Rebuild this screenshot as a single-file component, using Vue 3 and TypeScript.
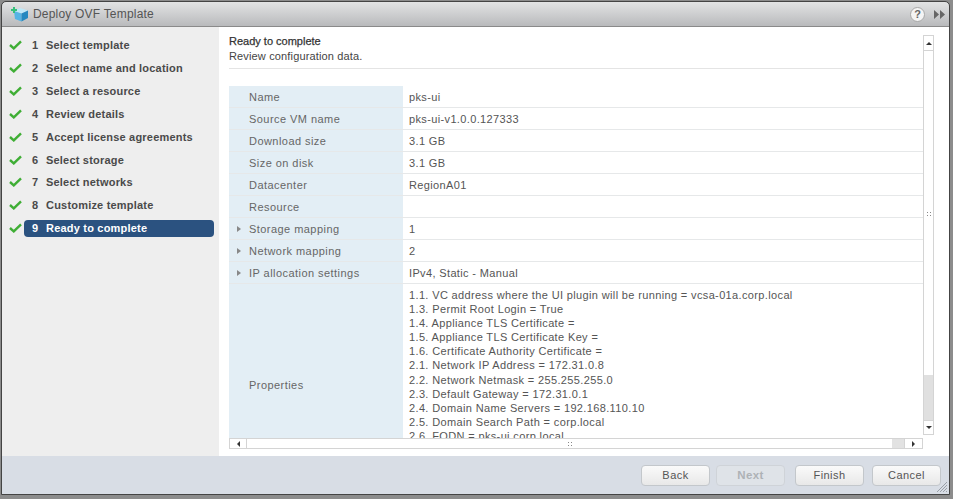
<script setup lang="ts">
const steps = [
  'Select template', 'Select name and location', 'Select a resource', 'Review details',
  'Accept license agreements', 'Select storage', 'Select networks', 'Customize template', 'Ready to complete',
]
const rows = [
  { k: 'Name', v: 'pks-ui' },
  { k: 'Source VM name', v: 'pks-ui-v1.0.0.127333' },
  { k: 'Download size', v: '3.1 GB' },
  { k: 'Size on disk', v: '3.1 GB' },
  { k: 'Datacenter', v: 'RegionA01' },
  { k: 'Resource', v: '' },
  { k: 'Storage mapping', v: '1', exp: true },
  { k: 'Network mapping', v: '2', exp: true },
  { k: 'IP allocation settings', v: 'IPv4, Static - Manual', exp: true },
]
const props = [
  '1.1. VC address where the UI plugin will be running = vcsa-01a.corp.local',
  '1.3. Permit Root Login = True',
  '1.4. Appliance TLS Certificate =',
  '1.5. Appliance TLS Certificate Key =',
  '1.6. Certificate Authority Certificate =',
  '2.1. Network IP Address = 172.31.0.8',
  '2.2. Network Netmask = 255.255.255.0',
  '2.3. Default Gateway = 172.31.0.1',
  '2.4. Domain Name Servers = 192.168.110.10',
  '2.5. Domain Search Path = corp.local',
  '2.6. FQDN = pks-ui.corp.local',
]
</script>

<template>
  <div class="page">
    <div class="dialog">
      <header class="head">
        <svg class="logo" width="20" height="20" viewBox="0 0 20 20">
          <path d="M11 4 L19 6.5 L12.5 9.5 L5 7 Z" fill="#bfe8f8" />
          <path d="M5 7 L12.5 9.5 V17.5 L6 15 Z" fill="#55b4e4" />
          <path d="M12.5 9.5 L19 6.5 V14 L12.5 17.5 Z" fill="#2488c0" />
          <path d="M2 5 H4 V3 H6 V5 H8 V7 H6 V9 H4 V7 H2 Z" fill="#35c07a" />
        </svg>
        <span class="title">Deploy OVF Template</span>
        <span class="help">?</span>
        <svg class="more" width="12" height="9" viewBox="0 0 12 9">
          <path d="M0 0 L5 4.5 L0 9 Z M6 0 L11 4.5 L6 9 Z" fill="#666" />
        </svg>
      </header>
      <div class="body">
        <nav class="side">
          <div v-for="(s, i) in steps" :key="s" class="step">
            <svg class="check" width="13" height="10" viewBox="0 0 13 10">
              <path d="M1 5 L4.8 8.4 L12 1.4" fill="none" stroke="#3fae35" stroke-width="2.4" />
            </svg>
            <div class="pill" :class="{ on: i === 8 }">
              <span class="num">{{ i + 1 }}</span>
              <span>{{ s }}</span>
            </div>
          </div>
        </nav>
        <main class="main">
          <div class="viewport">
            <div class="scrollarea">
              <div class="content">
                <div class="h1">Ready to complete</div>
                <div class="h2">Review configuration data.</div>
                <div class="rule"></div>
                <div v-for="r in rows" :key="r.k" class="row">
                  <div class="key">
                    <span v-if="r.exp" class="tri"></span>
                    {{ r.k }}
                  </div>
                  <div class="val">{{ r.v }}</div>
                </div>
                <div class="row big">
                  <div class="key">Properties</div>
                  <div class="val lines">
                    <div v-for="p in props" :key="p">{{ p }}</div>
                  </div>
                </div>
              </div>
              <div class="hbar">
                <div class="btn-h"><span class="ar left"></span></div>
                <div class="thumb-h"><span class="grip"></span></div>
                <div class="track-h"></div>
                <div class="btn-h wide"><span class="ar right"></span></div>
              </div>
            </div>
            <div class="vbar">
              <div class="btn-v"><span class="ar up"></span></div>
              <div class="thumb-v"><span class="grip"></span></div>
              <div class="track-v"></div>
              <div class="btn-v"><span class="ar down"></span></div>
            </div>
          </div>
        </main>
      </div>
      <footer class="foot">
        <button class="b">Back</button>
        <button class="b dis next">Next</button>
        <button class="b finish">Finish</button>
        <button class="b">Cancel</button>
        <svg class="resize" width="12" height="12" viewBox="0 0 12 12">
          <path d="M11 1 L1 11 M11 4 L4 11 M11 7 L7 11 M11 10 L10 11" stroke="#9aa0a8" stroke-width="1" fill="none" />
        </svg>
      </footer>
    </div>
  </div>
</template>

<style>
html, body { margin: 0; background: #8c8c8c; }
</style>

<style scoped>
.page {
  width: 953px;
  height: 499px;
  padding: 2px 4px 5px 2px;
  box-sizing: border-box;
  background: #8c8c8c;
  font-family: "Liberation Sans", Arial, sans-serif;
  overflow: hidden;
}
.dialog {
  position: relative;
  height: 100%;
  display: flex;
  flex-direction: column;
  border-radius: 4px 4px 0 0;
  outline: 1px solid #444;
  background: #fff;
  overflow: hidden;
}
.head {
  height: 25px;
  flex: none;
  display: flex;
  align-items: center;
  padding: 0 3px 0 7px;
  background: linear-gradient(#e2e3e4, #b9babc);
  border-bottom: 1px solid #8a8a8a;
  box-sizing: border-box;
}
.logo { margin-right: 4px; flex: none; }
.title { font-size: 12px; color: #555; letter-spacing: 0.2px; flex: 1; }
.help {
  width: 15px;
  height: 15px;
  border-radius: 50%;
  border: 1px solid #a8a8a8;
  background: #f4f4f4;
  box-sizing: border-box;
  font-size: 11px;
  font-weight: 700;
  line-height: 13px;
  text-align: center;
  color: #666;
  margin-right: 9px;
}
.more { flex: none; }
.body { flex: 1; min-height: 0; display: flex; }
.side {
  width: 217px;
  flex: none;
  background: #eeeeee;
  padding-top: 7px;
  box-sizing: border-box;
}
.step {
  height: 22.85px;
  display: flex;
  align-items: center;
  padding-left: 7px;
}
.check { flex: none; margin-right: 2px; }
.pill {
  width: 190px;
  height: 17px;
  display: flex;
  align-items: center;
  border-radius: 4px;
  padding-left: 8px;
  box-sizing: border-box;
  font-size: 11px;
  font-weight: 700;
  letter-spacing: 0.2px;
  color: #4a4a4a;
  white-space: nowrap;
}
.pill.on { background: #2b5280; color: #fff; }
.num { width: 14px; flex: none; }
.main { flex: 1; min-width: 0; padding: 7px 15px 8px 10px; display: flex; }
.viewport { flex: 1; display: flex; min-width: 0; margin-bottom: -1px; }
.scrollarea { flex: 1; min-width: 0; display: flex; flex-direction: column; }
.content { flex: 1; min-height: 0; overflow: hidden; font-size: 11px; color: #555; }
.h1 { font-size: 11px; font-weight: 400; color: #333; line-height: 15px; -webkit-text-stroke: 0.25px #333; }
.h2 { line-height: 15px; color: #444; letter-spacing: 0.15px; }
.rule { height: 1px; background: #e4e4e4; margin-top: 4px; margin-bottom: 17px; }
.row { display: flex; height: 22px; border-bottom: 1px solid #e6e8e9; box-sizing: border-box; }
.key {
  width: 174px;
  flex: none;
  background: #e3eef5;
  display: flex;
  align-items: center;
  padding-left: 20px;
  box-sizing: border-box;
  position: relative;
  color: #666;
  font-size: 11px;
  letter-spacing: 0.45px;
}
.tri {
  position: absolute;
  left: 8px;
  top: 8px;
  border-left: 4px solid #888;
  border-top: 3px solid transparent;
  border-bottom: 3px solid transparent;
}
.val {
  flex: 1;
  display: flex;
  align-items: center;
  padding-left: 6px;
  letter-spacing: 0.36px;
}
.row.big { height: 202px; border-bottom: 0; }
.lines { display: block; padding-top: 4px; line-height: 14.1px; }
.hbar {
  height: 11px;
  flex: none;
  display: flex;
  border: solid #d4d4d4;
  border-width: 1px 0 1px 1px;
  box-sizing: border-box;
  background: #fff;
}
.btn-h {
  width: 17px;
  flex: none;
  display: flex;
  align-items: center;
  justify-content: center;
  border-right: 1px solid #d4d4d4;
  box-sizing: border-box;
}
.btn-h.wide { width: 18px; border-right: 1px solid #d4d4d4; }
.thumb-h { flex: 1; display: flex; align-items: center; justify-content: center; }
.track-h { width: 12px; flex: none; background: #e2e2e2; border-right: 1px solid #d4d4d4; }
.vbar {
  width: 11px;
  flex: none;
  display: flex;
  flex-direction: column;
  border: 1px solid #d4d4d4;
  border-bottom: 0;
  box-sizing: border-box;
  height: 400px;
  margin-top: 1px;
  background: #fff;
}
.btn-v {
  height: 15px;
  flex: none;
  display: flex;
  align-items: center;
  justify-content: center;
  border-bottom: 1px solid #d4d4d4;
  box-sizing: border-box;
}
.btn-v:last-child { border-top: 1px solid #d4d4d4; border-bottom: 1px solid #d4d4d4; }
.thumb-v { flex: 1; display: flex; align-items: center; justify-content: center; }
.track-v { height: 45px; flex: none; background: #e0e0e0; }
.grip {
  width: 6px;
  height: 5px;
  background-image: radial-gradient(circle, #888 0.9px, transparent 1px);
  background-size: 3px 3px;
}
.ar { width: 0; height: 0; display: block; }
.ar.up { border: 3px solid transparent; border-top: 0; border-bottom: 3px solid #333; }
.ar.down { border: 3px solid transparent; border-bottom: 0; border-top: 3px solid #333; }
.ar.left { border: 3px solid transparent; border-left: 0; border-right: 3px solid #333; }
.ar.right { border: 3px solid transparent; border-right: 0; border-left: 3px solid #333; }
.foot {
  height: 38px;
  flex: none;
  position: relative;
  display: flex;
  align-items: center;
  padding: 0 8px 0 0;
  justify-content: flex-end;
  gap: 8px;
  background: #d8dde5;
  box-sizing: border-box;
}
.b {
  width: 69px;
  height: 21px;
  border: 1px solid #c3c7cb;
  border-radius: 4px;
  background: linear-gradient(#fafafa, #e8e8e8);
  font: 11px "Liberation Sans", Arial, sans-serif;
  letter-spacing: 0.45px;
  color: #555;
  padding: 0;
}
.b.dis { color: #aeb2b6; font-weight: 700; background: #dfe3e8; border-color: #cfd3d8; font-size: 11.5px; }
.next { margin-left: -2px; }
.finish { margin-left: 2px; }
.resize { position: absolute; right: 1px; bottom: 1px; }
</style>
